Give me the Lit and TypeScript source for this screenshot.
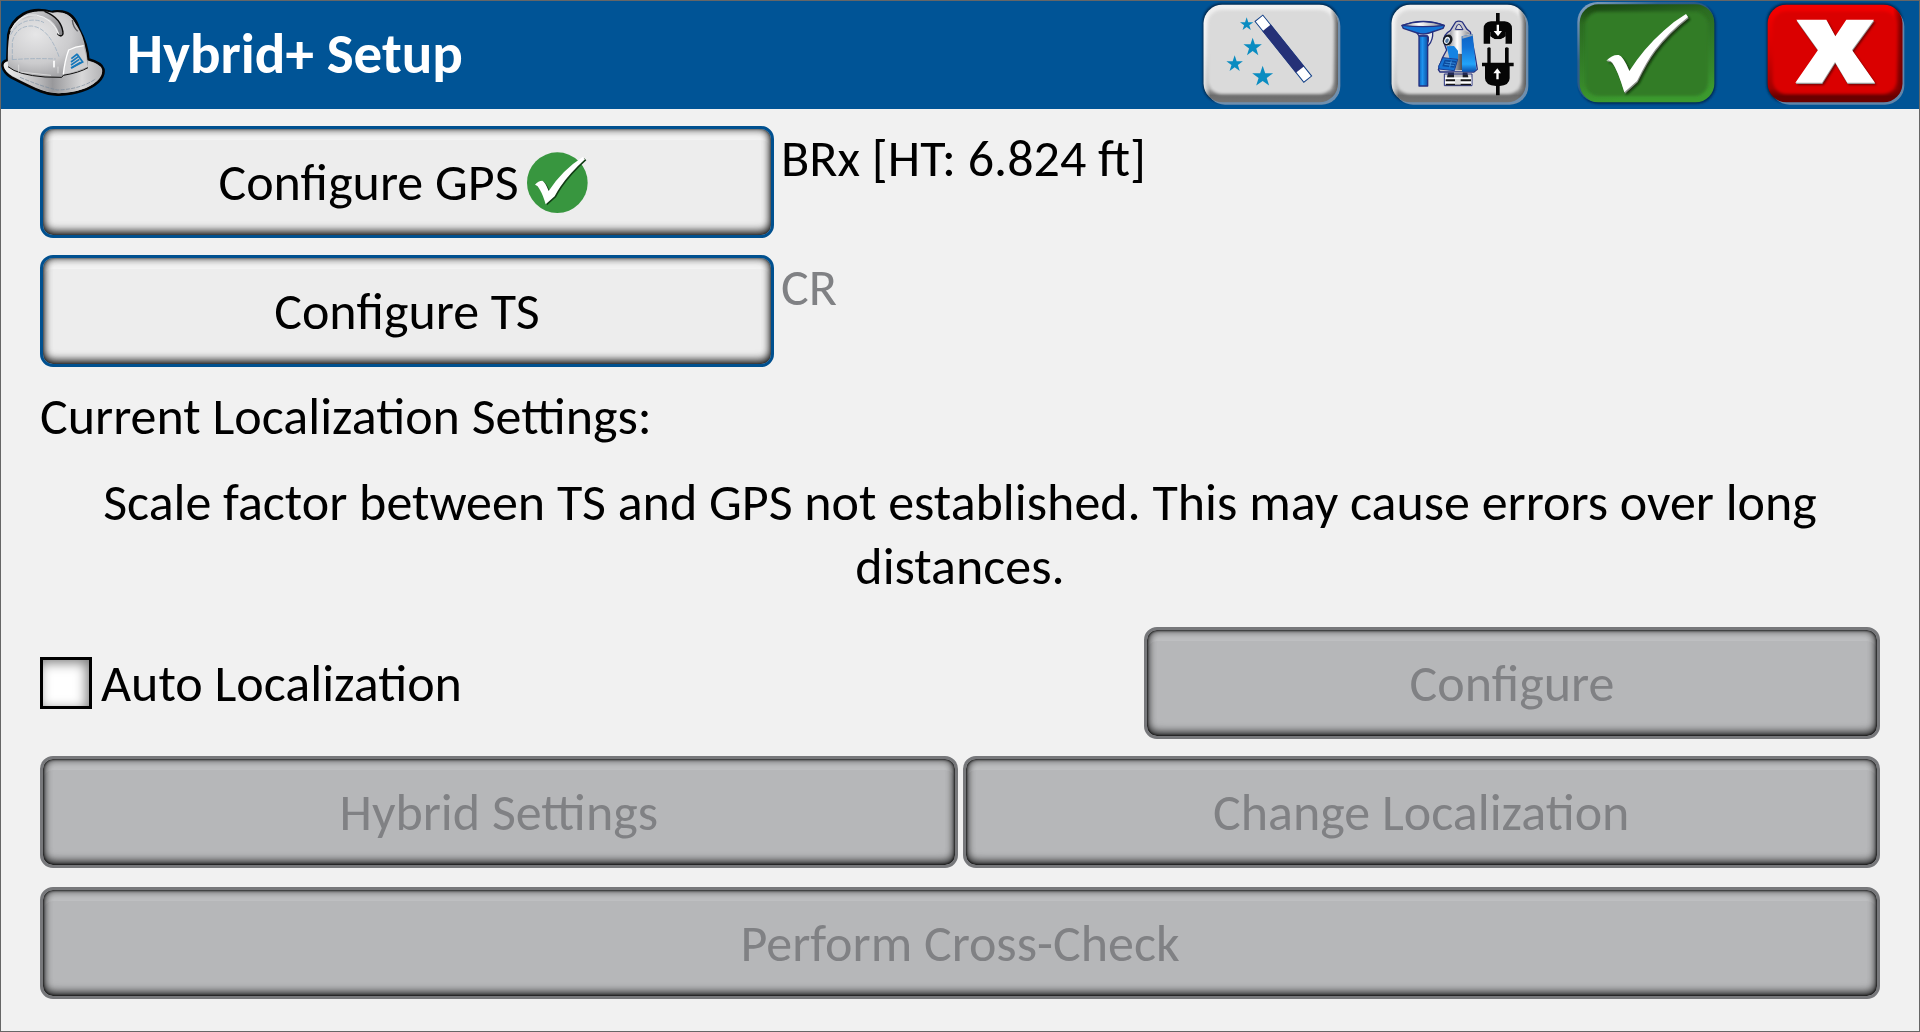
import { LitElement, html, css, svg } from "lit";
import { customElement, property, state } from "lit/decorators.js";

const star = (cx: number, cy: number, r: number) => {
  const points = Array.from({ length: 10 }, (_, i) => {
    const radius = i % 2 ? r * 0.39 : r;
    const angle = (Math.PI / 5) * i - Math.PI / 2;
    return `${(cx + radius * Math.cos(angle)).toFixed(1)},${(cy + radius * Math.sin(angle)).toFixed(1)}`;
  }).join(" ");
  return svg`<polygon points=${points} fill="#0a8cc1"/>`;
};

const blurDefs = svg`
  <filter id="soft" x="-20%" y="-20%" width="140%" height="140%"><feGaussianBlur stdDeviation="5"/></filter>
  <filter id="shade" x="-20%" y="-20%" width="140%" height="140%"><feGaussianBlur stdDeviation="3"/></filter>`;

const greyPlate = (x: number) => svg`
  <defs>
    ${blurDefs}
    <linearGradient id="edge" x1="0" y1="0" x2="0" y2="1">
      <stop offset="0" stop-color="#f2f2f2"/><stop offset=".5" stop-color="#d4d4d4"/>
      <stop offset=".86" stop-color="#a8a8a8"/><stop offset=".93" stop-color="#6c6c6c"/><stop offset="1" stop-color="#747474"/>
    </linearGradient>
    <linearGradient id="side" x1="0" y1="0" x2="1" y2="0">
      <stop offset="0" stop-color="#fff" stop-opacity=".7"/><stop offset=".05" stop-color="#fff" stop-opacity="0"/>
      <stop offset=".94" stop-color="#555" stop-opacity="0"/><stop offset="1" stop-color="#555" stop-opacity=".9"/>
    </linearGradient>
  </defs>
  <rect x=${x - 3} y="10" width="408" height="298" rx="56" fill="#00264a" filter="url(#shade)"/>
  <rect x=${x + 8} y="22" width="402" height="292" rx="56" fill="#6f8fae"/>
  <rect x=${x} y="14" width="403" height="293" rx="56" fill="url(#edge)"/>
  <rect x=${x} y="14" width="403" height="293" rx="56" fill="url(#side)"/>
  <rect x=${x + 13} y="30" width="376" height="252" rx="42" fill="#dadada" filter="url(#soft)"/>
  <rect x=${x + 20} y="38" width="362" height="236" rx="36" fill="#dadada"/>`;

const wandIcon = html`<svg viewBox="27 3 432 324" aria-hidden="true">
  ${greyPlate(41)}
  ${star(170, 73, 21)}${star(188, 142, 29)}${star(134, 192, 26)}${star(218, 230, 33)}
  <g transform="translate(280 146) rotate(51.3)">
    <rect x="-117" y="-15" width="234" height="30" fill="#fff" stroke="#123f86" stroke-width="3"/>
    <rect x="-80" y="-16" width="160" height="32" fill="#253177"/>
  </g>
</svg>`;

const instrumentsIcon = html`<svg viewBox="21 3 432 324" aria-hidden="true">
  ${greyPlate(35)}
  <defs>
    <linearGradient id="pole" x1="0" y1="0" x2="1" y2="0">
      <stop offset="0" stop-color="#0b63bd"/><stop offset=".4" stop-color="#1f93ee"/><stop offset="1" stop-color="#0a50a4"/>
    </linearGradient>
    <linearGradient id="body" x1="0" y1="0" x2="0" y2="1">
      <stop offset="0" stop-color="#0d62c4"/><stop offset=".35" stop-color="#1272d6"/><stop offset=".8" stop-color="#22a4fa"/><stop offset="1" stop-color="#0a50ae"/>
    </linearGradient>
    <linearGradient id="metal" x1="0" y1="0" x2="1" y2="0">
      <stop offset="0" stop-color="#8d8d92"/><stop offset=".4" stop-color="#fff"/><stop offset="1" stop-color="#85858a"/>
    </linearGradient>
    <linearGradient id="column" x1="0" y1="0" x2="1" y2="0">
      <stop offset="0" stop-color="#e8e8ea"/><stop offset="1" stop-color="#4c4c52"/>
    </linearGradient>
  </defs>
  <g stroke="#26307f" stroke-width="4" stroke-linejoin="round">
    <path d="M108 94h50q2 26-13 43-3-1-4-5 6-8 4-20l-4-4h-24z" fill="#ececee"/>
    <rect x="117" y="108" width="26" height="150" fill="url(#pole)"/>
    <path d="M66 77q64-26 127 0l-4 8-42 14q-17 6-35 0L70 85z" fill="#1477d8"/>
    <path d="M66 76q64-22 127 0-64 8-127 0z" fill="url(#metal)"/>
    <path d="M211 92l16-26q9-5 20 0l14 22 10 8 14 70 7 42-10 8H180l-5-7 12-35 13-24-10-26q2-22 21-32z" fill="#c9c9cd"/>
  </g>
  <path d="M226 88l6-13q4-4 9 0l8 14z" fill="#dadada" stroke="#26307f" stroke-width="3"/>
  <path d="M213 92h42l16 8-26 10v50h-36l-4-46z" fill="url(#metal)"/>
  <path d="M209 162h37v48h-37z" fill="url(#column)"/>
  <path d="M245 109l33-7 6 62 5 45-8 6h-35z" fill="url(#body)"/>
  <path d="M247 109l31-7v5l-31 9z" fill="#9aa7b8"/>
  <path d="M200 139l22-1 12 14v26l-26-3z" fill="#1583e3"/>
  <path d="M189 173l44 5-10 34-46-5-1-9z" fill="#1673d3" stroke="#173f96" stroke-width="3"/>
  <path d="M194 179l35 4-6 20-36-4z" fill="#0b4a9d"/>
  <path d="M196 186l30 4M193 193l30 4M214 182l-5 20" stroke="#4ba6f3" stroke-width="2"/>
  <ellipse cx="203" cy="120" rx="14" ry="17" fill="#14181f" transform="rotate(25 203 120)"/>
  <ellipse cx="201" cy="121" rx="8" ry="11" fill="#e9f0f8" transform="rotate(25 201 121)"/>
  <ellipse cx="201" cy="122" rx="5" ry="7" fill="#54789f" transform="rotate(25 201 122)"/>
  <path d="M204 218h58l4 18h-66z" fill="#1d2028"/>
  <path d="M222 217h26v18h-26z" fill="#b9b9bd"/>
  <path d="M193 222h83v35h-83z" fill="none" stroke="#26307f" stroke-width="3"/>
  <path d="M195 232h79v23h-79z" fill="#fff"/>
  <path d="M197 238h76v6h-76zM197 251h76v5h-76z" fill="#151515"/>
  <path d="M225 237h17v17h-17z" fill="#d8d8d8"/>
  <g fill="#050505">
    <path d="M348 39h11v25h15q22 2 22 22v45h-20V96h-45v35h-20V86q0-20 22-22h15z"/>
    <path d="M322 144q6-4 10 0v44h43v-44q5-4 11 0v44h15v11h-12v36q-1 22-30 23v28h-11v-28q-33-2-33-23v-36h-9v-11h16z"/>
    <path d="M331 94h46v16l-16 8h-16l-14-8z"/>
  </g>
  <path d="M331 131v-23q8 9 13 10h20q8-1 12-10v23z" fill="#dadada"/>
  <g fill="#fff">
    <path d="M350 74h7v19h9l-12 16-13-16h9z"/>
    <path d="M349 238h7v-18h7l-11-15-12 15h9z"/>
  </g>
</svg>`;

const tickPath = "M139 182q18-19 37-17 13 2 32 48 42-67 103-121 30-28 67-50l6 9q-60 47-99 99-23 30-54 93l-38 34q-20-67-36-89-7-9-18-6z";

const acceptIcon = html`<svg viewBox="45 3 432 324" aria-hidden="true">
  <defs>
    ${blurDefs}
    <linearGradient id="green" x1="0" y1="0" x2=".15" y2="1">
      <stop offset="0" stop-color="#17400f"/><stop offset=".2" stop-color="#2b6c21"/><stop offset=".8" stop-color="#37882b"/><stop offset="1" stop-color="#3c9a2e"/>
    </linearGradient>
    <linearGradient id="rim" x1="0" y1="0" x2="1" y2="1">
      <stop offset="0" stop-color="#8fa9c4"/><stop offset=".3" stop-color="#2e608e"/><stop offset="1" stop-color="#16406a"/>
    </linearGradient>
  </defs>
  <rect x="57" y="12" width="410" height="300" rx="58" fill="#002c57" filter="url(#shade)"/>
  <rect x="52" y="6" width="410" height="300" rx="60" fill="url(#rim)"/>
  <rect x="59" y="13" width="404" height="294" rx="56" fill="url(#green)"/>
  <rect x="76" y="36" width="368" height="252" rx="40" fill="#317b25" filter="url(#soft)"/>
  <path d=${tickPath} fill="#12350c" transform="translate(7 8)" filter="url(#shade)"/>
  <path d=${tickPath} fill="#8b8f8a" transform="translate(2 4)"/>
  <path d=${tickPath} fill="#fff"/>
</svg>`;

const crossPath = "M709 59h90l27 50 33-50h83l-66 91 69 98h-83l-37-62-39 62h-80l68-98z";

const cancelIcon = html`<svg viewBox="609 3 432 324" aria-hidden="true">
  <defs>
    ${blurDefs}
    <linearGradient id="red" x1="0" y1="0" x2="0" y2="1">
      <stop offset="0" stop-color="#f60000"/><stop offset=".5" stop-color="#d40000"/><stop offset=".86" stop-color="#a00000"/><stop offset=".94" stop-color="#680000"/><stop offset="1" stop-color="#6c0000"/>
    </linearGradient>
    <linearGradient id="redside" x1="0" y1="0" x2="1" y2="0">
      <stop offset=".93" stop-color="#600" stop-opacity="0"/><stop offset="1" stop-color="#600" stop-opacity=".9"/>
    </linearGradient>
  </defs>
  <rect x="620" y="10" width="408" height="298" rx="56" fill="#00264a" filter="url(#shade)"/>
  <rect x="631" y="22" width="402" height="292" rx="58" fill="#5f86ab"/>
  <rect x="623" y="14" width="404" height="293" rx="56" fill="url(#red)"/>
  <rect x="623" y="14" width="404" height="293" rx="56" fill="url(#redside)"/>
  <rect x="638" y="34" width="372" height="248" rx="42" fill="#da0000" filter="url(#soft)"/>
  <path d=${crossPath} fill="#700000" transform="translate(5 7)" filter="url(#shade)"/>
  <path d=${crossPath} fill="#9a9a9a" transform="translate(1 4)"/>
  <path d=${crossPath} fill="#fff"/>
</svg>`;

const helmetIcon = html`<svg viewBox="3 3 324 324" role="img" aria-label="Menu">
  <defs>
    <radialGradient id="dome" cx=".35" cy=".35" r=".75">
      <stop offset="0" stop-color="#e6e6e7"/><stop offset=".6" stop-color="#cbcbcd"/><stop offset="1" stop-color="#99999c"/>
    </radialGradient>
    <linearGradient id="brim" x1="0" y1="0" x2="1" y2="0">
      <stop offset="0" stop-color="#f0f0f0"/><stop offset=".35" stop-color="#bdbdbf"/><stop offset=".5" stop-color="#98989b"/><stop offset=".8" stop-color="#d8d8d9"/><stop offset="1" stop-color="#b5b5b7"/>
    </linearGradient>
    <linearGradient id="ridge" x1="0" y1="0" x2="1" y2="1">
      <stop offset="0" stop-color="#d5d5d7"/><stop offset="1" stop-color="#7f7f83"/>
    </linearGradient>
  </defs>
  <path d="M22 181Q6 184 8 198q3 20 26 34 56 29 88 42 27 11 54 10 80-4 118-38 20-19 16-39-5-18-45-29-3-45-29-93-14-45-50-50-19-3-31 1Q104 22 70 42 32 64 25 104z" fill="#b9b9bb" stroke="#050505" stroke-width="8" stroke-linejoin="round"/>
  <path d="M22 184q-13 5-11 15 4 17 27 29 54 28 89 42 24 10 50 10 78-4 113-37 17-17 14-36-4-14-40-24l-4 22-75 23q-85 2-127-13z" fill="url(#brim)"/>
  <path d="M24 199Q22 140 28 106 38 66 74 46q40-18 84-8 44-7 63 25 24 32 32 65 8 31 11 63l-2 12-77 26-50 1q-79-5-111-31z" fill="url(#dome)"/>
  <path d="M96 38q34-6 54 1 37 20 41 58l-11 12q-11-46-49-59-25-9-66 11 12-17 31-23z" fill="url(#ridge)"/>
  <path d="M135 35q49 20 54 63 1 7-6 10-7-1-10-6" fill="none" stroke="#0b0b0b" stroke-width="4" stroke-linecap="round"/>
  <path d="M217 60q2 22 16 34" fill="none" stroke="#5d5d61" stroke-width="4"/>
  <path d="M31 92q30-54 78-47 48 9 68 59" fill="none" stroke="#f0f0f0" stroke-width="3"/>
  <path d="M37 179V125q12-47 57-47 52 4 83 92M37 179q60-5 130-2M32 104q20-37 58-43 25-3 42 7" fill="none" stroke="#91a6ba" stroke-width="2" stroke-dasharray="14 4"/>
  <path d="M24 200q30 25 111 31l50 1 5-6q48-8 74-23" fill="none" stroke="#0d0d0d" stroke-width="3"/>
  <path d="M60 232q66 28 112 38 70-2 116-34" fill="none" stroke="#77899c" stroke-width="2" stroke-dasharray="12 4"/>
  <path d="M56 194v24M61 216l92 10M174 200v20" stroke="#e9e9e9" stroke-width="2" fill="none"/>
  <path d="M162 184v16" stroke="#fff" stroke-width="5" stroke-linecap="round"/>
  <path d="M190 223q4-40 16-73 20-10 45-13 10 34 12 63-38 17-73 23z" fill="#cfcfd1"/>
  <path d="M190 223q4-40 16-73 20-10 45-13" fill="none" stroke="#fff" stroke-width="4"/>
  <g fill="none" stroke="#1678bb" stroke-width="5">
    <path d="M232 162L214 176M235 170L213 186M238 178L213 195M242 187L213 204"/>
    <path d="M231 162l17 24-34 18"/>
  </g>
</svg>`;

const smallTick = "M24 98q10-12 22-12 9 4 19 31 40-62 102-102l7 7q-44 40-74 82-9 13-17 29l-27 24q-8-28-17-43-6-13-15-16z";

const readyBadge = html`<svg class="badge" viewBox="0 0 183 183" role="img" aria-label="Ready">
  <circle cx="91" cy="92" r="91" fill="#38963f"/>
  <path d=${smallTick} fill="#123d15" transform="translate(4 3)"/>
  <path d=${smallTick} fill="#fff"/>
</svg>`;

@customElement("tool-button")
export class ToolButton extends LitElement {
  @property() label = "";
  @property({ attribute: false }) icon: unknown = null;

  static styles = css`
    :host { display: block; }
    .tool { display: block; width: 144px; height: 108px; padding: 0; border: 0; background: none; cursor: pointer; }
    svg { display: block; width: 100%; height: 100%; }
  `;

  render() {
    return html`<button class="tool" type="button" aria-label=${this.label}>${this.icon}</button>`;
  }
}

@customElement("panel-button")
export class PanelButton extends LitElement {
  @property({ type: Boolean }) disabled = false;

  static styles = css`
    :host { display: block; }
    .panel {
      box-sizing: border-box;
      display: flex;
      align-items: center;
      justify-content: center;
      width: 100%;
      height: 112px;
      padding: 0 16px;
      border: 3px solid #00508f;
      border-radius: 13px;
      background: #ededed;
      box-shadow:
        inset 0 0 2px rgba(0, 0, 0, 0.6),
        inset 0 -4px 8px rgba(0, 0, 0, 0.7),
        inset 0 0 8px rgba(0, 0, 0, 0.7),
        inset 0 11px 0 rgba(255, 255, 255, 0.35);
      color: #000;
      font: inherit;
      line-height: 64px;
      white-space: nowrap;
      cursor: pointer;
    }
    .panel:disabled {
      border-color: #77787b;
      background: #b6b7b9;
      box-shadow:
        inset 0 0 2px 1px rgba(0, 0, 0, 0.6),
        inset 0 -4px 8px rgba(0, 0, 0, 0.6),
        inset 0 0 8px rgba(0, 0, 0, 0.7),
        inset 0 11px 0 rgba(255, 255, 255, 0.12);
      color: #808184;
      cursor: default;
    }
  `;

  render() {
    return html`<button class="panel" type="button" ?disabled=${this.disabled}><slot></slot></button>`;
  }
}

@customElement("app-root")
export class AppRoot extends LitElement {
  @state() private autoLocalization = false;

  static styles = css`
    :host {
      box-sizing: border-box;
      display: flex;
      flex-direction: column;
      min-height: 100vh;
      border: 1px solid #666;
      background: #f1f1f1;
      color: #000;
      font-family: Calibri, Carlito, Lato, sans-serif;
      font-size: 52px;
      line-height: 64px;
    }
    .bar {
      display: flex;
      align-items: center;
      height: 108px;
      padding-right: 12px;
      background: #005496;
      color: #fff;
    }
    .logo { display: block; width: 108px; height: 108px; flex: none; }
    .logo svg { display: block; width: 100%; height: 100%; }
    .title { flex: 1; margin: 0; padding: 0 0 2px 18px; font-size: 57px; font-weight: 700; line-height: 64px; }
    .tools { display: flex; gap: 44px; }
    .content { display: flex; flex-direction: column; gap: 17px; padding: 17px 39px 32px; }
    .device { display: grid; grid-template-columns: 2fr 3fr; column-gap: 5px; }
    .status { margin: 0; padding-left: 2px; }
    .muted { color: #808184; }
    .heading { margin: 0; font-size: 52px; font-weight: 400; }
    .message { margin: 0; padding: 5px 32px 12px; text-align: center; }
    .split { display: grid; grid-template-columns: 3fr 2fr; align-items: center; }
    .pair { display: grid; grid-template-columns: 1fr 1fr; column-gap: 5px; padding-bottom: 2px; }
    .check { display: flex; align-items: center; gap: 9px; }
    .box {
      appearance: none;
      box-sizing: border-box;
      width: 52px;
      height: 52px;
      margin: 0;
      border: 3px solid #000;
      background: #fff;
      box-shadow: inset -3px 3px 12px rgba(0, 0, 0, 0.5);
    }
    .box:checked { background: #38963f; }
    .badge { display: block; width: 61px; height: 61px; margin: 0 8px; }
  `;

  private toggle(event: Event) {
    this.autoLocalization = (event.target as HTMLInputElement).checked;
  }

  render() {
    return html`
      <header class="bar">
        <a class="logo" href="#menu">${helmetIcon}</a>
        <h1 class="title">Hybrid+ Setup</h1>
        <div class="tools">
          <tool-button label="Setup wizard" .icon=${wandIcon}></tool-button>
          <tool-button label="Instruments" .icon=${instrumentsIcon}></tool-button>
          <tool-button label="Accept" .icon=${acceptIcon}></tool-button>
          <tool-button label="Cancel" .icon=${cancelIcon}></tool-button>
        </div>
      </header>
      <main class="content">
        <div class="device">
          <panel-button>Configure GPS${readyBadge}</panel-button>
          <p class="status">BRx [HT: 6.824 ft]</p>
        </div>
        <div class="device">
          <panel-button>Configure TS</panel-button>
          <p class="status muted">CR</p>
        </div>
        <h2 class="heading">Current Localization Settings:</h2>
        <p class="message">
          Scale factor between TS and GPS not established. This may cause errors over long distances.
        </p>
        <div class="split">
          <div class="check">
            <input class="box" id="auto" type="checkbox" .checked=${this.autoLocalization} @change=${this.toggle} />
            <label for="auto">Auto Localization</label>
          </div>
          <panel-button disabled>Configure</panel-button>
        </div>
        <div class="pair">
          <panel-button disabled>Hybrid Settings</panel-button>
          <panel-button disabled>Change Localization</panel-button>
        </div>
        <panel-button disabled>Perform Cross-Check</panel-button>
      </main>
    `;
  }
}
